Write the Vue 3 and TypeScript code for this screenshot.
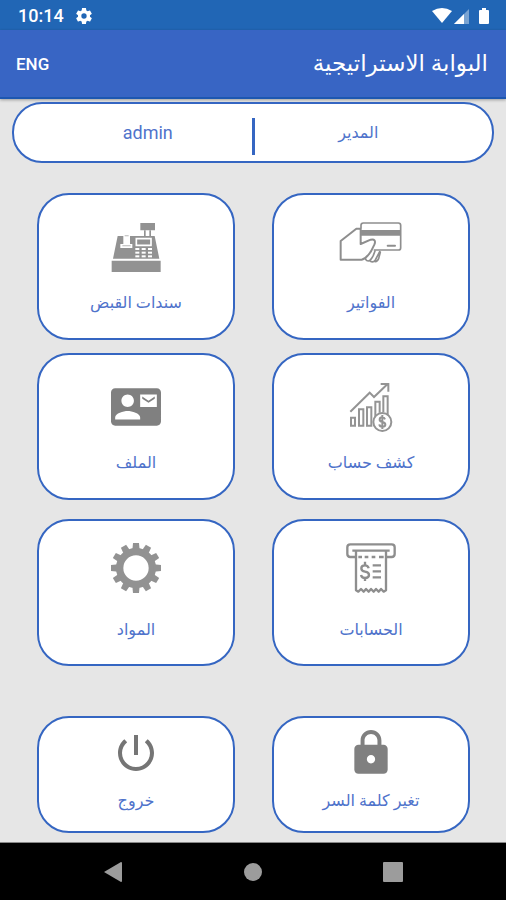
<script setup lang="ts">
type IconName = 'card' | 'register' | 'chart' | 'contact' | 'receipt' | 'gear' | 'lock' | 'power'

interface Tile {
  icon: IconName
  label: string
}

interface Row {
  kind: 'first' | 'second' | 'third' | 'footer'
  tiles: Tile[]
}

const rows: Row[] = [
  { kind: 'first', tiles: [{ icon: 'card', label: 'الفواتير' }, { icon: 'register', label: 'سندات القبض' }] },
  { kind: 'second', tiles: [{ icon: 'chart', label: 'كشف حساب' }, { icon: 'contact', label: 'الملف' }] },
  { kind: 'third', tiles: [{ icon: 'receipt', label: 'الحسابات' }, { icon: 'gear', label: 'المواد' }] },
  { kind: 'footer', tiles: [{ icon: 'lock', label: 'تغير كلمة السر' }, { icon: 'power', label: 'خروج' }] },
]

const teeth: number[] = Array.from({ length: 12 }, (_, i) => i * 30)
const keyRows: number[] = [78, 89, 100]
const keyColumns: number[] = [73, 92, 111]
</script>

<template>
  <div class="screen" dir="rtl" lang="ar">
    <div class="status" dir="ltr">
      <span class="clock">10:14</span>
      <svg class="status-gear" viewBox="0 0 24 24" aria-hidden="true">
        <path d="M19.14 12.94c.04-.3.06-.61.06-.94 0-.32-.02-.64-.07-.94l2.03-1.58c.18-.14.23-.41.12-.61l-1.92-3.32c-.12-.22-.37-.29-.59-.22l-2.39.96c-.5-.38-1.03-.7-1.62-.94l-.36-2.54c-.04-.24-.24-.41-.48-.41h-3.84c-.24 0-.43.17-.47.41l-.36 2.54c-.59.24-1.13.57-1.62.94l-2.39-.96c-.22-.08-.47 0-.59.22L2.74 8.87c-.12.21-.08.47.12.61l2.03 1.58c-.05.3-.09.63-.09.94s.02.64.07.94l-2.03 1.58c-.18.14-.23.41-.12.61l1.92 3.32c.12.22.37.29.59.22l2.39-.96c.5.38 1.03.7 1.62.94l.36 2.54c.05.24.24.41.48.41h3.84c.24 0 .44-.17.47-.41l.36-2.54c.59-.24 1.13-.56 1.62-.94l2.39.96c.22.08.47 0 .59-.22l1.92-3.32c.12-.22.07-.47-.12-.61l-2.01-1.58zM12 15.2a3.2 3.2 0 1 1 0-6.4 3.2 3.2 0 0 1 0 6.4z" />
      </svg>
      <svg class="signals" viewBox="0 0 58 18" aria-hidden="true">
        <path d="M0 4Q10 -2 20 4L10 16z" />
        <path d="M22 17L37 2V17z" opacity=".4" />
        <path d="M22 17L32 7V17z" />
        <path d="M48 3h2V1h4v2h2q1 0 1 1v12q0 1-1 1h-8q-1 0-1-1V4q0-1 1-1z" />
      </svg>
    </div>

    <header class="bar">
      <h1 class="title">البوابة الاستراتيجية</h1>
      <button class="language" type="button" lang="en">ENG</button>
    </header>

    <main class="content">
      <div class="user">
        <span class="user-part">المدير</span>
        <span class="divider"></span>
        <span class="user-part user-name" lang="en">admin</span>
      </div>

      <nav class="rows">
        <div v-for="row in rows" :key="row.kind" class="row" :class="`row-${row.kind}`">
          <button v-for="tile in row.tiles" :key="tile.icon" class="tile" type="button">
            <svg v-if="tile.icon === 'card'" class="icon icon-wide" viewBox="0 0 192 150" fill="none" stroke="#8e8e8e" stroke-width="6" stroke-linejoin="round" stroke-linecap="round" aria-hidden="true">
              <path d="M66 18V10q0-7 7-7H178q7 0 7 7V77q0 7-7 7H106" stroke-width="5" />
              <path d="M146 71h22" />
              <path d="M80 102q-3 14 8 15 8-2 15-17l5-13M94 118q9 5 15-4l13-25M106 118q8 3 13-8l5-20" stroke-width="5" />
              <path d="M64 20H52L5 57V113H68C82 110 88 99 96 88L106 68C111 56 106 50 95 53L65 66V20" fill="#fff" />
              <path d="M64 24H185V41H64z" fill="#8e8e8e" stroke="none" />
            </svg>

            <svg v-else-if="tile.icon === 'register'" class="icon" viewBox="0 0 150 150" fill="#929292" aria-hidden="true">
              <path d="M2 116H149V150H2zM20 42H131L145 110H6zM88 3H132V25H88z" />
              <path d="M99 25h5v17h-5zM115 25h5v17h-5z" />
              <path d="M28 66H37V35H57V66H64V78H28z" fill="#fff" />
              <path d="M34 70H59V73H34zM41 40H53V43H41z" fill="#b8b8b8" />
              <path d="M76 50H120V70H76z" fill="none" stroke="#fff" stroke-width="5" />
              <template v-for="y in keyRows" :key="y">
                <rect v-for="x in keyColumns" :key="x" :x="x" :y="y" width="12" height="6" fill="#fff" />
              </template>
            </svg>

            <svg v-else-if="tile.icon === 'chart'" class="icon" viewBox="0 0 150 150" fill="none" stroke="#949494" stroke-width="6" aria-hidden="true">
              <path d="M13 89L71 32L84 45L124 7M104 6H127V29" />
              <path d="M15 107H27V131H15zM39 82H52V131H39zM63 76H76V131H63zM88 96V59H101V92M112 91V43H125V100M88 96V131H84" />
              <circle cx="109" cy="120" r="27" fill="#fff" />
              <path d="M117 112q-2-6-8-6-8 0-8 7 0 5 8 7 9 2 9 8 0 6-9 6-8 0-9-7M109 99v42" />
            </svg>

            <svg v-else-if="tile.icon === 'contact'" class="icon" viewBox="0 0 24 24" fill="#808080" aria-hidden="true">
              <path d="M21 8V7l-3 2-3-2v1l3 2 3-2zm1-5H2C.9 3 0 3.900 0 5v14c0 1.100.9 2 2 2h20c1.100 0 1.990-.9 1.990-2L24 5c0-1.100-.9-2-2-2zM8 6c1.660 0 3 1.340 3 3s-1.340 3-3 3-3-1.340-3-3 1.340-3 3-3zm6 12H2v-1c0-2 4-3.100 6-3.100s6 1.100 6 3.100v1zm8-6h-8V6h8v6z" />
            </svg>

            <svg v-else-if="tile.icon === 'receipt'" class="icon" viewBox="0 0 150 150" fill="none" stroke="#8e8e8e" stroke-width="7" stroke-linejoin="round" aria-hidden="true">
              <path d="M30 42H13Q4 42 4 33V13Q4 4 13 4H137Q146 4 146 13V33Q146 42 137 42H120" />
              <path d="M19 23H131M30 24V142L37 146L45 138L53 146L60 138L68 146L75 138L83 146L90 138L98 146L105 138L113 146L120 142V24" />
              <path d="M37 42h11M56 42h11M77 42h11M99 42h14M80 67h25M80 85h25M80 103h25" />
              <path d="M68 76q-2-9-11-9-11 0-11 9 0 8 11 10 12 2 12 10 0 9-12 9-10 0-12-9M57 56v11M57 105v9" />
            </svg>

            <svg v-else-if="tile.icon === 'gear'" class="icon" viewBox="0 0 150 150" fill="#929292" aria-hidden="true">
              <circle cx="75" cy="75" r="49" fill="none" stroke="#929292" stroke-width="22" />
              <path v-for="angle in teeth" :key="angle" d="M64 22L66 0H84L86 22z" :transform="`rotate(${angle} 75 75)`" />
            </svg>

            <svg v-else-if="tile.icon === 'lock'" class="icon" viewBox="0 0 24 24" fill="#808080" aria-hidden="true">
              <path d="M18 8h-1V6c0-2.760-2.240-5-5-5S7 3.240 7 6v2H6c-1.100 0-2 .9-2 2v10c0 1.100.9 2 2 2h12c1.100 0 2-.9 2-2V10c0-1.100-.9-2-2-2zm-6 9c-1.100 0-2-.9-2-2s.9-2 2-2 2 .9 2 2-.9 2-2 2zm3.100-9H8.900V6c0-1.710 1.390-3.100 3.100-3.100 1.710 0 3.100 1.390 3.100 3.100v2z" />
            </svg>

            <svg v-else class="icon icon-power" viewBox="0 0 24 24" fill="#757575" aria-hidden="true">
              <path d="M13 3h-2v10h2V3zm4.830 2.170l-1.420 1.420C17.990 7.860 19 9.810 19 12c0 3.870-3.130 7-7 7s-7-3.130-7-7c0-2.190 1.010-4.140 2.580-5.420L6.170 5.170C4.230 6.820 3 9.260 3 12c0 4.970 4.030 9 9 9s9-4.030 9-9c0-2.740-1.230-5.180-3.170-6.830z" />
            </svg>
            <span class="label">{{ tile.label }}</span>
          </button>
        </div>
      </nav>
    </main>

    <div class="system" dir="ltr">
      <button type="button" class="system-button" aria-label="Back">
        <svg viewBox="0 0 20 22" width="20" height="22" aria-hidden="true"><path d="M1 11L18 1Q19 1 19 2V20Q19 21 18 21z" /></svg>
      </button>
      <button type="button" class="system-button" aria-label="Home">
        <svg viewBox="0 0 20 20" width="20" height="20" aria-hidden="true"><circle cx="10" cy="10" r="9" /></svg>
      </button>
      <button type="button" class="system-button" aria-label="Recents">
        <svg viewBox="0 0 20 20" width="20" height="20" aria-hidden="true"><rect width="20" height="20" rx="1" /></svg>
      </button>
    </div>
  </div>
</template>

<style>
body {
  background: #e6e6e6;
}
</style>

<style scoped>
.screen {
  display: flex;
  flex-direction: column;
  min-height: 100vh;
  background: #e6e6e6;
  color: #4f73cb;
  font-family: Roboto, "DejaVu Sans", sans-serif;
}

button {
  margin: 0;
  padding: 0;
  border: 0;
  background: none;
  color: inherit;
  font: inherit;
  cursor: pointer;
}

.status {
  display: flex;
  align-items: center;
  box-sizing: border-box;
  height: 30px;
  padding: 2px 16px 0 18px;
  background: #2166b5;
  color: #fff;
}

.clock {
  font-size: 18px;
  font-weight: 500;
  line-height: 20px;
}

.status-gear {
  width: 20px;
  height: 20px;
  margin-left: 10px;
  fill: #fff;
}

.signals {
  width: 58px;
  height: 18px;
  margin-left: auto;
  fill: #fff;
}

.bar {
  display: flex;
  align-items: center;
  justify-content: space-between;
  box-sizing: border-box;
  height: 69px;
  padding: 0 18px 0 16px;
  border-bottom: 2px solid #1d57b0;
  background: #3865c4;
  box-shadow: 0 1px 3px #0005;
  color: #fff;
}

.title {
  margin: 0;
  font-size: 23px;
  font-weight: 400;
  line-height: 32px;
}

.language {
  font-size: 17px;
  font-weight: 500;
  line-height: 24px;
}

.content {
  flex: 1;
  padding: 3px 0 9px;
}

.user {
  display: flex;
  align-items: center;
  box-sizing: border-box;
  height: 61px;
  margin: 0 12px;
  padding: 0 30px;
  border: 2px solid #3566c2;
  border-radius: 30px;
  background: #fff;
}

.user-part {
  flex: 1;
  font-size: 16px;
  line-height: 24px;
  text-align: center;
}

.user-name {
  font-size: 18px;
}

.divider {
  width: 3px;
  height: 37px;
  margin-top: 8px;
  background: #3566c2;
}

.rows {
  padding: 30px 36px 0 37px;
}

.row {
  display: grid;
  grid-template-columns: 1fr 1fr;
  gap: 37px;
}

.row-second {
  margin-top: 13px;
}

.row-third {
  margin-top: 19px;
}

.row-footer {
  margin-top: 50px;
}

.tile {
  display: flex;
  flex-direction: column;
  align-items: center;
  gap: 18px;
  height: 147px;
  padding-top: 27px;
  border: 2px solid #3566c2;
  border-radius: 32px;
  background: #fff;
}

.row-third .tile {
  gap: 24px;
  padding-top: 22px;
}

.row-footer .tile {
  gap: 10px;
  height: 117px;
  padding-top: 10px;
}

.icon {
  flex: none;
  width: 50px;
  height: 50px;
}

.icon-wide {
  width: 64px;
}

.icon-power {
  width: 48px;
}

.label {
  font-size: 16px;
  line-height: 26px;
}

.system {
  display: flex;
  align-items: center;
  justify-content: space-between;
  box-sizing: border-box;
  height: 58px;
  padding: 0 96px;
  border-top: 1px solid #888;
  background: #000;
}

.system-button {
  display: grid;
  place-items: center;
  width: 34px;
  height: 34px;
  fill: #9c9c9c;
}
</style>
